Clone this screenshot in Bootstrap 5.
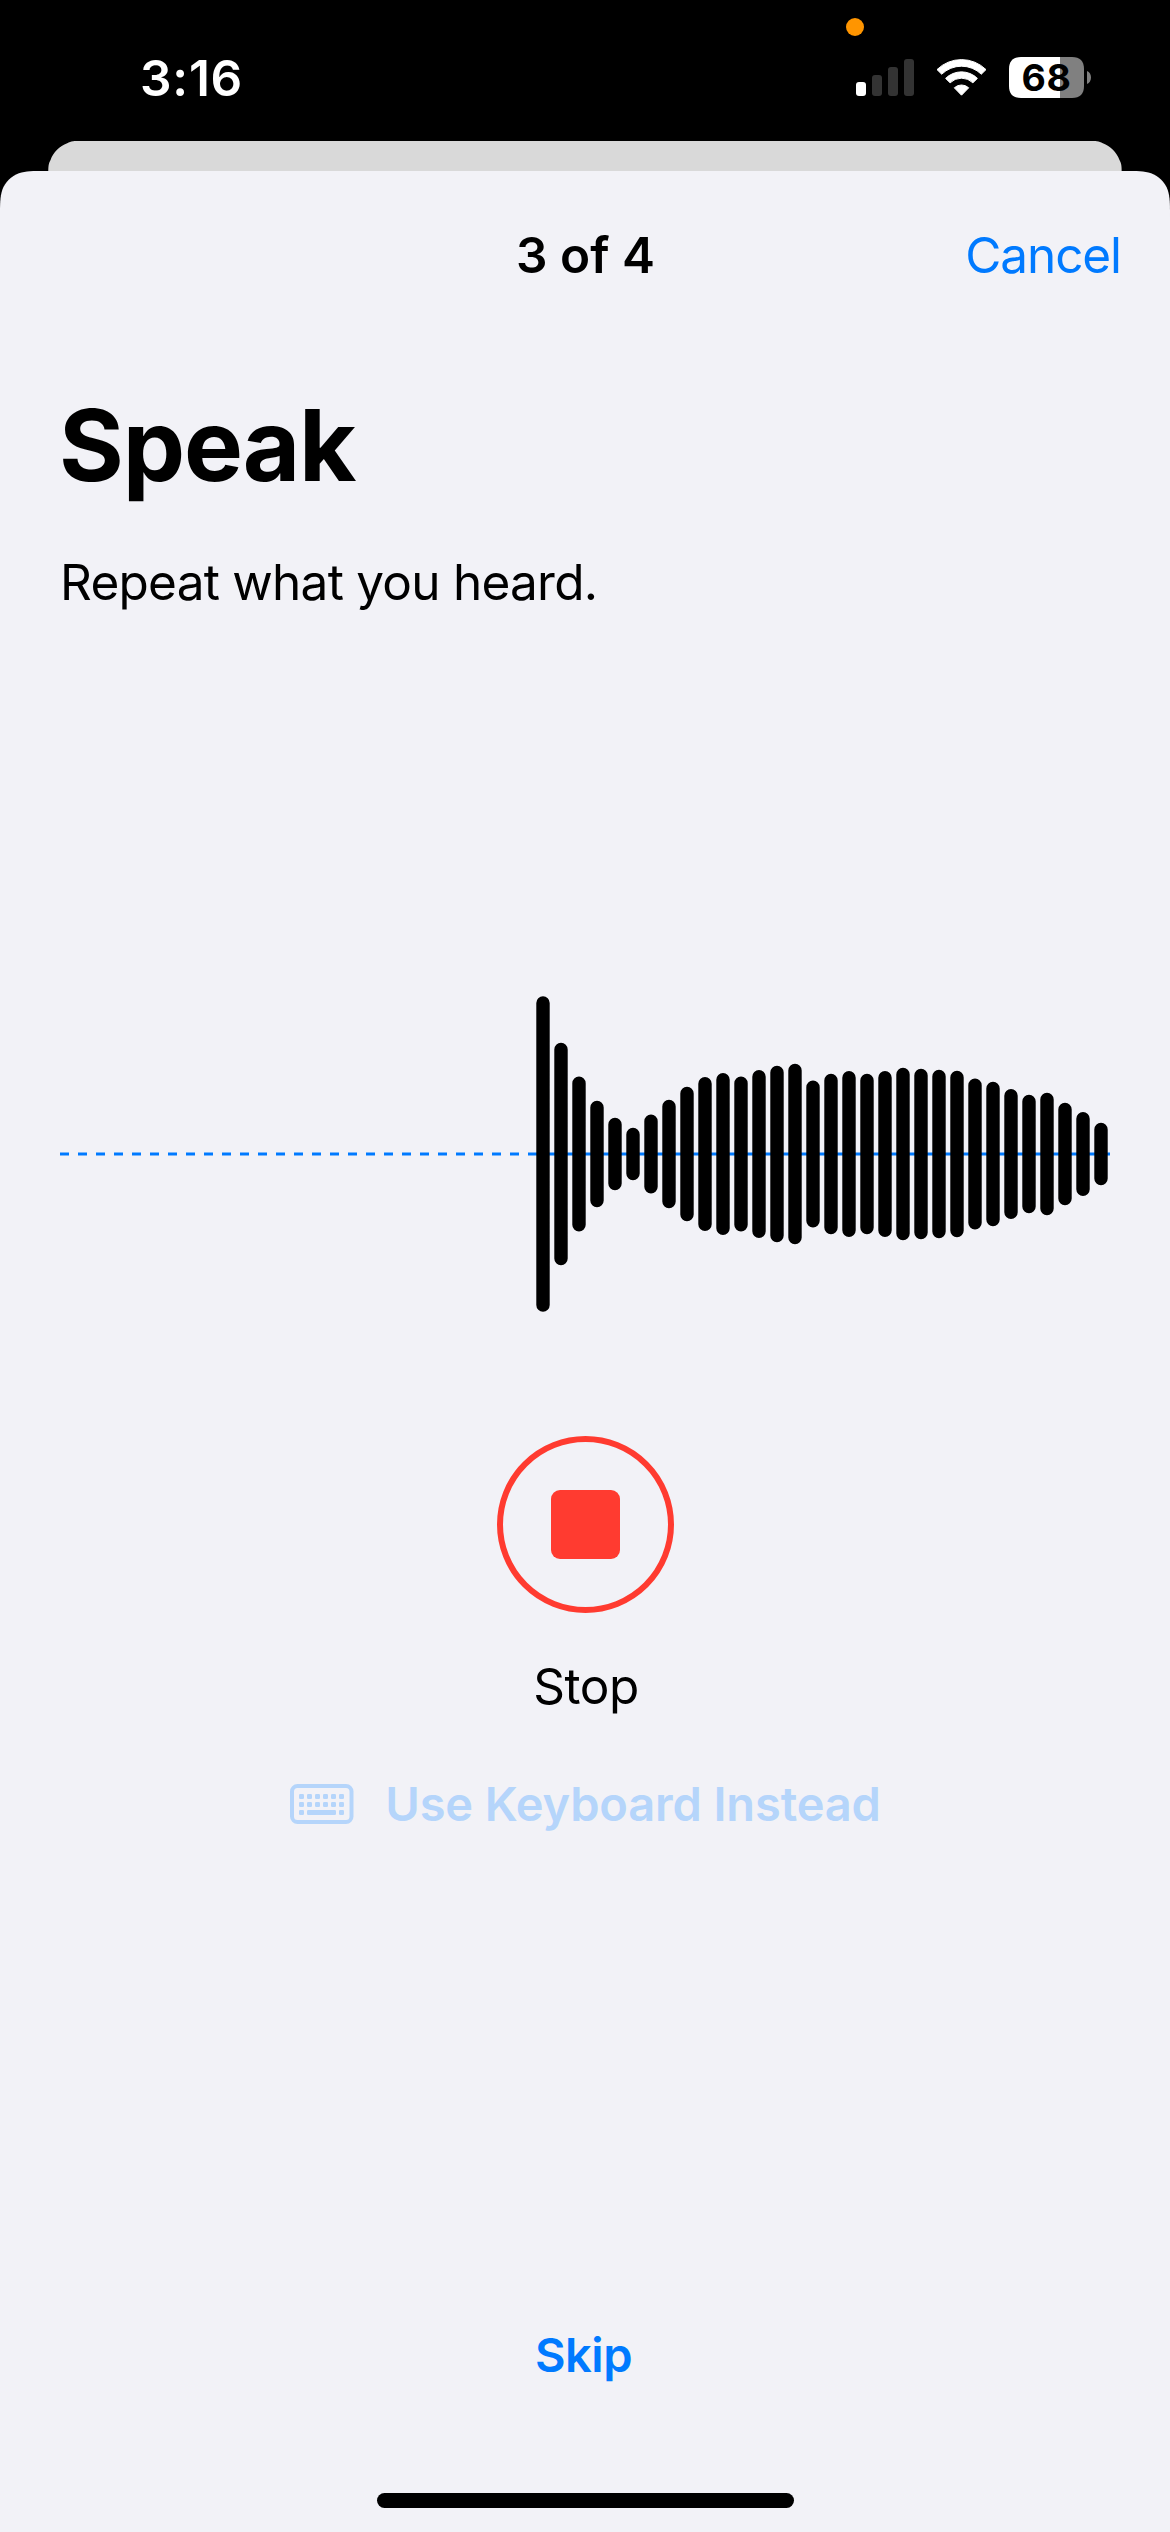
<!DOCTYPE html>
<html lang="en">
<head>
<meta charset="utf-8">
<meta name="viewport" content="width=device-width, initial-scale=1">
<title>Speak</title>
<link href="https://cdn.jsdelivr.net/npm/bootstrap@5.3.0/dist/css/bootstrap.min.css" rel="stylesheet">
<style>
  :root { --ios-blue: #007aff; --ios-red: #ff3b30; --sheet: #f2f2f7; }
  body { width: 1170px; height: 2532px; overflow: hidden; background: #000; color: #000;
         font-family: Inter, "Liberation Sans", sans-serif; font-size: 49.5px; line-height: 60px; }
  svg { display: block; flex: none; }
  .status-bar { height: 141px; padding: 48px 79px 0 140px; }
  .clock { letter-spacing: .8px; font-weight: 600; color: #fff; }
  .status-icons { height: 59px; gap: 22px; }
  .mic-dot { left: 846px; top: 18px; width: 18px; height: 18px; background: #ff9500; }
  .battery { width: 82px; height: 41px; }
  .battery-level { left: 0; top: 0; width: 75px; height: 41px; line-height: 41px; font-size: 37.5px;
                   font-weight: 700; letter-spacing: .6px; color: #000; }
  .back-card { height: 30px; margin: 0 48.3px; background: #d9d9d9;
    clip-path: path("M0 46V32.65C0 26 0 22.8 2.25 18.9 5.07 11.2 11.2 5.07 18.9 2.25 22.8 0 26 0 32.65 0H1040.75C1047.4 0 1050.6 0 1054.5 2.25 1062.2 5.07 1068.3 11.2 1071.2 18.9 1073.4 22.8 1073.4 26 1073.4 32.65V46Z"); }
  .sheet { height: 2361px; padding: 54px 0 24px; background: var(--sheet);
    clip-path: path("M0 2361V45.9C0 32.65 0 26 2.25 18.9 5.07 11.2 11.2 5.07 18.9 2.25 26 0 32.65 0 45.9 0H1124.1C1137.35 0 1144 0 1151.1 2.25 1158.8 5.07 1164.9 11.2 1167.75 18.9 1170 26 1170 32.65 1170 45.9V2361Z"); }
  .sheet-head { height: 60px; padding: 0 49px; }
  .sheet-head .step { font-weight: 600; padding-left: 1px; }
  .btn-plain { color: var(--ios-blue); font-size: inherit; line-height: inherit; letter-spacing: -1.1px;
               padding: 0; border: 0; background: none; }
  .intro { padding: 100px 59px 0; }
  .intro h1 { font-size: 99px; line-height: 120px; font-weight: 700; letter-spacing: -1.16px; margin: 0 0 47px; }
  .intro p { letter-spacing: -.75px; margin: 0; padding-left: 1px; }
  .wave { margin: 384px 60px 0; }
  .stop-btn { margin-top: 124px; margin-left: 1px; width: 177px; height: 177px; border: 6px solid var(--ios-red); }
  .stop-btn span { width: 69px; height: 69px; border-radius: 9px; background: var(--ios-red); }
  .stop-label { margin-top: 43px; padding-left: 2px; letter-spacing: -.45px; }
  .kbd-btn { margin-top: 59px; margin-left: 1px; gap: 31px; color: #b5d5fb; font-size: 47px; line-height: 57px;
             font-weight: 600; letter-spacing: -.14px; }
  .skip-btn { color: var(--ios-blue); font-size: 47px; line-height: 57px; font-weight: 600;
              letter-spacing: -.5px; margin: 0 3px 110px 0; }
  .home-bar { width: 417px; height: 15px; background: #000; margin-left: 1px; }
</style>
<script src="https://cdn.jsdelivr.net/npm/bootstrap@5.3.0/dist/js/bootstrap.bundle.min.js"></script>
</head>
<body class="position-relative">

<header class="status-bar d-flex justify-content-between align-items-start">
  <span class="mic-dot position-absolute rounded-circle"></span>
  <span class="clock">3:16</span>
  <div class="status-icons d-flex align-items-center">
    <svg width="58" height="37" viewBox="0 0 58 37" fill="#333">
      <rect x="0" y="23" width="10" height="14" rx="3" fill="#fff"/>
      <rect x="16" y="16" width="10" height="21" rx="3"/>
      <rect x="32" y="8" width="10" height="29" rx="3"/>
      <rect x="48" y="0" width="10" height="37" rx="3"/>
    </svg>
    <svg width="51" height="37" viewBox="0 0 51 37" fill="#fff" stroke="#fff" stroke-width="1" stroke-linejoin="round">
      <path d="M1 10.6A35 35 0 0 1 50 10.6L45.3 15.2A28.5 28.5 0 0 0 5.7 15.2Z"/>
      <path d="M9.6 19.4A22.6 22.6 0 0 1 41.4 19.4L36.9 23.8A16.3 16.3 0 0 0 14.1 23.8Z"/>
      <path d="M18.3 28.8A10.6 10.6 0 0 1 32.7 28.8L25.5 36.2Z"/>
    </svg>
    <div class="battery position-relative">
      <svg width="82" height="41" viewBox="0 0 82 41">
        <path fill="#fff" d="M51 0H12C4 0 0 4 0 12V29C0 37 4 41 12 41H51Z"/>
        <path fill="#808080" d="M51 0H63C71 0 75 4 75 12V29C75 37 71 41 63 41H51Z"/>
        <path fill="#808080" d="M78 14C80.6 15 82 17.8 82 20.5S80.6 26 78 27Z"/>
      </svg>
      <span class="battery-level position-absolute text-center">68</span>
    </div>
  </div>
</header>

<div class="back-card"></div>

<main class="sheet d-flex flex-column">
  <div class="sheet-head row g-0">
    <div class="col"></div>
    <div class="step col-auto">3 of 4</div>
    <div class="col d-flex justify-content-end"><button class="btn-plain" type="button">Cancel</button></div>
  </div>

  <section class="intro">
    <h1>Speak</h1>
    <p>Repeat what you heard.</p>
  </section>

  <svg class="wave" width="1050" height="316" viewBox="0 0 1050 316" fill="none">
    <path d="M0 158H1050" stroke="#007aff" stroke-width="3" stroke-dasharray="9 9"/>
    <path stroke="#000" stroke-width="13.4" stroke-linecap="round" d="M483 7V309M501 53.5V262.5M519 87.2V228.8M537 111.5V204.5M555 128.5V187.5M573 138.5V177.5M591 125.2V190.8M609 110.5V205.5M627 97.5V218.5M645 87.8V228.2M663 83.8V232.2M681 87.2V228.8M699 80.8V235.2M717 76.5V239.5M735 74.5V241.5M753 91.2V224.8M771 84.5V231.5M789 81.8V234.2M807 84.5V231.5M825 81.8V234.2M843 78.5V237.5M861 79.5V236.5M879 80.5V235.5M897 81.5V234.5M915 89.2V226.8M933 92.5V223.5M951 99.8V216.2M969 105.5V210.5M987 103.5V212.5M1005 113.5V202.5M1023 122.8V193.2M1041 133.5V182.5"/>
  </svg>

  <section class="d-flex flex-column align-items-center">
    <button class="stop-btn rounded-circle bg-transparent p-0 d-flex align-items-center justify-content-center" type="button" aria-label="Stop"><span></span></button>
    <div class="stop-label">Stop</div>
    <button class="kbd-btn border-0 bg-transparent p-0 d-flex align-items-center" type="button">
      <svg width="64" height="40" viewBox="0 0 64 40" fill="currentColor">
        <rect x="2" y="2" width="59.5" height="36" rx="5.5" fill="none" stroke="currentColor" stroke-width="4"/>
        <g>
          <rect x="9" y="10" width="5" height="5" rx="1.3"/><rect x="17" y="10" width="5" height="5" rx="1.3"/><rect x="25" y="10" width="5" height="5" rx="1.3"/><rect x="33" y="10" width="5" height="5" rx="1.3"/><rect x="41" y="10" width="5" height="5" rx="1.3"/><rect x="49" y="10" width="5" height="5" rx="1.3"/>
          <rect x="9" y="18" width="5" height="5" rx="1.3"/><rect x="17" y="18" width="5" height="5" rx="1.3"/><rect x="25" y="18" width="5" height="5" rx="1.3"/><rect x="33" y="18" width="5" height="5" rx="1.3"/><rect x="41" y="18" width="5" height="5" rx="1.3"/><rect x="49" y="18" width="5" height="5" rx="1.3"/>
          <rect x="9" y="26" width="5" height="5" rx="1.3"/><rect x="17" y="26" width="29" height="5" rx="1.3"/><rect x="49" y="26" width="5" height="5" rx="1.3"/>
        </g>
      </svg>
      <span>Use Keyboard Instead</span>
    </button>
  </section>

  <footer class="mt-auto d-flex flex-column align-items-center">
    <button class="skip-btn border-0 bg-transparent p-0" type="button">Skip</button>
    <div class="home-bar rounded-pill"></div>
  </footer>
</main>
</body>
</html>
